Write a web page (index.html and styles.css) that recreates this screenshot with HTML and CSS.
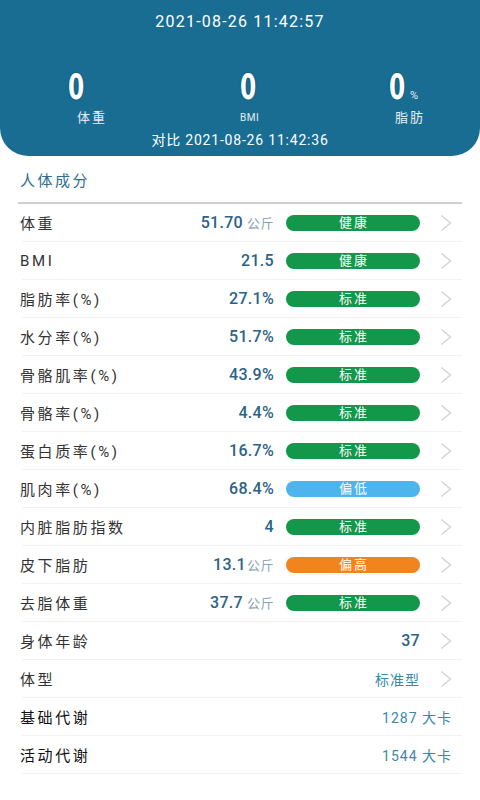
FILE: index.html
```html
<!DOCTYPE html>
<html lang="zh-CN">
<head>
<meta charset="utf-8">
<title>人体成分</title>
<link rel="stylesheet" href="styles.css">
</head>
<body>
<header class="hero">
  <div class="date">2021-08-26 11:42:57</div>
  <div class="stats">
    <div class="stat s1"><div class="num"><span class="digit">0</span></div><div class="lbl">体重</div></div>
    <div class="stat s2"><div class="num"><span class="digit">0</span></div><div class="lbl">BMI</div></div>
    <div class="stat s3"><div class="num"><span class="digit">0</span><span class="pct">%</span></div><div class="lbl">脂肪</div></div>
  </div>
  <div class="compare">对比 2021-08-26 11:42:36</div>
</header>
<main class="content">
  <div class="title">人体成分</div>
  <div class="divider"></div>
  <ul class="list">
    <li class="row"><span class="name">体重</span><span class="val">51.70<span class="unit">公斤</span></span><span class="badge green">健康</span><svg class="chev" viewBox="0 0 12 18"><polyline points="1.5,1.5 10.5,9 1.5,16.5"/></svg></li>
    <li class="row"><span class="name">BMI</span><span class="val">21.5</span><span class="badge green">健康</span><svg class="chev" viewBox="0 0 12 18"><polyline points="1.5,1.5 10.5,9 1.5,16.5"/></svg></li>
    <li class="row"><span class="name">脂肪率(%)</span><span class="val">27.1%</span><span class="badge green">标准</span><svg class="chev" viewBox="0 0 12 18"><polyline points="1.5,1.5 10.5,9 1.5,16.5"/></svg></li>
    <li class="row"><span class="name">水分率(%)</span><span class="val">51.7%</span><span class="badge green">标准</span><svg class="chev" viewBox="0 0 12 18"><polyline points="1.5,1.5 10.5,9 1.5,16.5"/></svg></li>
    <li class="row"><span class="name">骨骼肌率(%)</span><span class="val">43.9%</span><span class="badge green">标准</span><svg class="chev" viewBox="0 0 12 18"><polyline points="1.5,1.5 10.5,9 1.5,16.5"/></svg></li>
    <li class="row"><span class="name">骨骼率(%)</span><span class="val">4.4%</span><span class="badge green">标准</span><svg class="chev" viewBox="0 0 12 18"><polyline points="1.5,1.5 10.5,9 1.5,16.5"/></svg></li>
    <li class="row"><span class="name">蛋白质率(%)</span><span class="val">16.7%</span><span class="badge green">标准</span><svg class="chev" viewBox="0 0 12 18"><polyline points="1.5,1.5 10.5,9 1.5,16.5"/></svg></li>
    <li class="row"><span class="name">肌肉率(%)</span><span class="val">68.4%</span><span class="badge blue">偏低</span><svg class="chev" viewBox="0 0 12 18"><polyline points="1.5,1.5 10.5,9 1.5,16.5"/></svg></li>
    <li class="row"><span class="name">内脏脂肪指数</span><span class="val">4</span><span class="badge green">标准</span><svg class="chev" viewBox="0 0 12 18"><polyline points="1.5,1.5 10.5,9 1.5,16.5"/></svg></li>
    <li class="row"><span class="name">皮下脂肪</span><span class="val">13.1<span class="unit tight">公斤</span></span><span class="badge orange">偏高</span><svg class="chev" viewBox="0 0 12 18"><polyline points="1.5,1.5 10.5,9 1.5,16.5"/></svg></li>
    <li class="row"><span class="name">去脂体重</span><span class="val">37.7<span class="unit">公斤</span></span><span class="badge green">标准</span><svg class="chev" viewBox="0 0 12 18"><polyline points="1.5,1.5 10.5,9 1.5,16.5"/></svg></li>
    <li class="row"><span class="name">身体年龄</span><span class="val">37</span><svg class="chev" viewBox="0 0 12 18"><polyline points="1.5,1.5 10.5,9 1.5,16.5"/></svg></li>
    <li class="row"><span class="name">体型</span><span class="val text">标准型</span><svg class="chev" viewBox="0 0 12 18"><polyline points="1.5,1.5 10.5,9 1.5,16.5"/></svg></li>
    <li class="row end"><span class="name strong">基础代谢</span><span class="val text">1287 大卡</span></li>
    <li class="row end"><span class="name strong">活动代谢</span><span class="val text">1544 大卡</span></li>
  </ul>
</main>
</body>
</html>
```
FILE: styles.css
```css
* { box-sizing: border-box; }
html, body { margin: 0; padding: 0; background: #ffffff; }
body {
  width: 480px;
  font-family: Roboto, "Noto Sans CJK SC", "Noto Sans", sans-serif;
  color: #333;
}
.hero {
  height: 156px;
  background: #196d93;
  border-radius: 0 0 28px 28px;
  color: #ffffff;
  padding-top: 13px;
}
.date {
  text-align: center;
  font-size: 16px;
  line-height: 18px;
  letter-spacing: 1.2px;
}
.stats {
  display: grid;
  grid-template-columns: 172px 149px auto;
  padding-left: 68px;
  margin-top: 41px;
}
.num {
  height: 30px;
  line-height: 30px;
  white-space: nowrap;
}
.digit {
  display: inline-block;
  font-family: "DejaVu Sans Condensed", "DejaVu Sans", sans-serif;
  font-stretch: condensed;
  font-weight: bold;
  font-size: 36px;
  line-height: 30px;
  color: #ffffff;
  text-shadow: 0 0 2px #0b4560;
  transform: scaleX(0.72);
  transform-origin: left center;
  width: 17px;
}
.pct {
  font-size: 11px;
  margin-left: 4px;
  color: #e6eef3;
}
.lbl {
  font-size: 13px;
  line-height: 14px;
  margin-top: 9px;
  color: #e6eef3;
  letter-spacing: 2px;
}
.s1 .lbl { margin-left: 9px; }
.s2 .lbl { margin-left: 0; font-size: 10px; letter-spacing: 0.5px; }
.s3 .lbl { margin-left: 6px; }
.compare {
  text-align: center;
  font-size: 14px;
  line-height: 16px;
  margin-top: 7px;
  letter-spacing: 0.8px;
}
.content {
  padding: 0 18px;
}
.title {
  margin-top: 15px;
  padding-left: 2px;
  font-size: 15px;
  line-height: 20px;
  color: #2e6d92;
  letter-spacing: 2.5px;
}
.divider {
  margin-top: 11px;
  height: 2px;
  background: #cfcfcf;
}
.list {
  list-style: none;
  margin: 0;
  padding: 0;
}
.row {
  display: flex;
  align-items: center;
  height: 38px;
  border-bottom: 1px solid #f3f3f3;
  padding: 0 10px 0 2px;
  margin-left: 4px;
}
.row .name {
  flex: 1;
  margin-left: -4px;
  font-size: 15px;
  letter-spacing: 2.6px;
  color: #333333;
}
.row .name.strong { color: #111111; }
.val {
  font-size: 16px;
  font-weight: 500;
  color: #2d6287;
  letter-spacing: 0.3px;
  white-space: nowrap;
}
.val.text {
  font-size: 14px;
  font-weight: normal;
  color: #3a89a7;
  letter-spacing: 1px;
}
.unit {
  font-size: 13px;
  font-weight: normal;
  color: #8aa3b4;
  margin-left: 4px;
  letter-spacing: 0.5px;
}
.unit.tight { margin-left: 1px; }
.badge {
  width: 134px;
  height: 16px;
  margin-left: 12px;
  border-radius: 8px;
  color: #ffffff;
  font-size: 13px;
  line-height: 16px;
  text-align: center;
  letter-spacing: 2px;
  text-indent: 2px;
}
.green { background: #13974a; }
.blue { background: #4db4ee; }
.orange { background: #f1841c; }
.chev {
  width: 12px;
  height: 18px;
  margin-left: 20px;
  flex: none;
}
.chev polyline {
  fill: none;
  stroke: #d3d3d3;
  stroke-width: 1.4;
}
```
